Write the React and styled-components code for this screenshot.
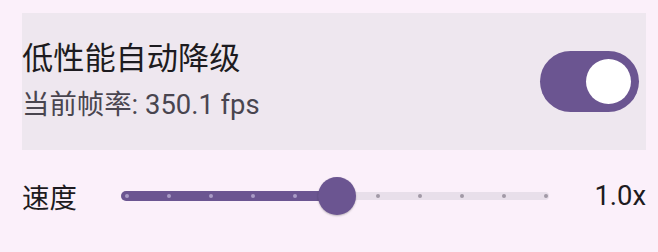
import React from "react";
import styled, { createGlobalStyle } from "styled-components";

const Global = createGlobalStyle`
  html, body { margin: 0; padding: 0; background: #FBF0FA; }
  body { font-family: Roboto, "Noto Sans CJK SC", sans-serif; }
  * { box-sizing: border-box; }
`;

const PURPLE = "#6B5591";

const Page = styled.div`
  width: 658px;
  height: 252px;
  padding: 13px 12px 0 22px;
  display: flex;
  flex-direction: column;
  background: #FBF0FA;
`;

const Panel = styled.div`
  height: 137px;
  background: #EEE7EF;
  display: flex;
  align-items: center;
  justify-content: space-between;
  padding-right: 7px;
`;

const TextBlock = styled.div`
  display: flex;
  flex-direction: column;
`;

const Title = styled.div`
  font-size: 31.2px;
  line-height: 46px;
  color: #1D1B20;
`;

const Subtitle = styled.div`
  font-size: 27.4px;
  line-height: 46px;
  color: #49454F;
`;

const Switch = styled.div`
  width: 99px;
  height: 61px;
  border-radius: 31px;
  background: ${PURPLE};
  display: flex;
  align-items: center;
  justify-content: flex-end;
  padding-right: 7.6px;
`;

const SwitchThumb = styled.div`
  width: 45.6px;
  height: 45.6px;
  border-radius: 50%;
  background: #FFFFFF;
`;

const Row = styled.div`
  height: 91px;
  display: flex;
  align-items: center;
`;

const Label = styled.div`
  width: 99px;
  font-size: 27.4px;
  color: #1D1B20;
`;

const Slider = styled.div`
  position: relative;
  width: 428px;
  height: 38px;
  flex: none;
`;

const Track = styled.div`
  position: absolute;
  left: 0;
  top: ${(p) => (p.$active ? 14 : 15)}px;
  height: ${(p) => (p.$active ? 10 : 8)}px;
  border-radius: 5px;
  background: ${(p) => (p.$active ? PURPLE : "#E8DFEA")};
`;

const Tick = styled.div`
  position: absolute;
  top: 17px;
  width: 4px;
  height: 4px;
  border-radius: 50%;
  background: ${(p) => (p.$active ? "#A99BC6" : "#A199A6")};
`;

const Thumb = styled.div`
  position: absolute;
  top: 0;
  width: 38px;
  height: 38px;
  border-radius: 50%;
  background: ${PURPLE};
  box-shadow: 0 1px 2px rgba(0, 0, 0, 0.25);
`;

const Value = styled.div`
  flex: 1;
  text-align: right;
  font-size: 27.4px;
  color: #1D1B20;
`;

export default function App() {
  const steps = 10;
  const index = 5;
  const width = 428;
  const inset = 4;
  const stepW = (width - 2 * inset - 1) / steps;
  const thumbCenter = inset + 2 + index * stepW;
  return (
    <>
      <Global />
      <Page>
        <Panel>
          <TextBlock>
            <Title>低性能自动降级</Title>
            <Subtitle>当前帧率: 350.1 fps</Subtitle>
          </TextBlock>
          <Switch>
            <SwitchThumb />
          </Switch>
        </Panel>
        <Row>
          <Label>速度</Label>
          <Slider>
            <Track style={{ width: `${width}px` }} />
            <Track $active style={{ width: `${thumbCenter}px` }} />
            {Array.from({ length: steps + 1 }).map((_, i) =>
              i === index ? null : (
                <Tick
                  key={i}
                  $active={i < index}
                  style={{ left: `${inset + i * stepW}px` }}
                />
              )
            )}
            <Thumb style={{ left: `${thumbCenter - 19}px` }} />
          </Slider>
          <Value>1.0x</Value>
        </Row>
      </Page>
    </>
  );
}
